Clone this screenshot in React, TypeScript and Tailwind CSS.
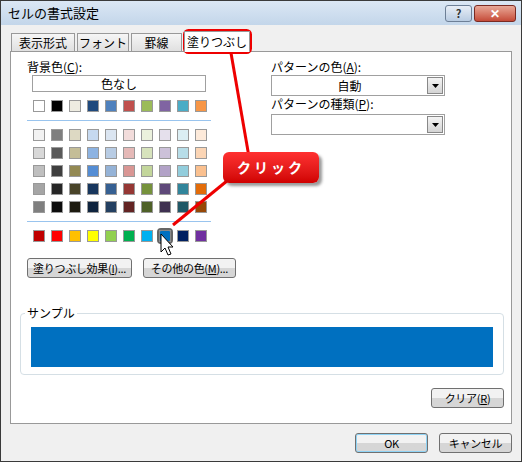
import React from "react";

const theme = ["#ffffff","#000000","#eeece1","#1f497d","#4f81bd","#c0504d","#9bbb59","#8064a2","#4bacc6","#f79646"];
const tints = [
  ["#f2f2f2","#7f7f7f","#ddd9c3","#c6d9f0","#dbe5f1","#f2dcdb","#ebf1dd","#e5e0ec","#dbeef3","#fdeada"],
  ["#d8d8d8","#595959","#c4bd97","#8db3e2","#b8cce4","#e5b9b7","#d7e3bc","#ccc1d9","#b7dde8","#fbd5b5"],
  ["#bfbfbf","#3f3f3f","#938953","#548dd4","#95b3d7","#d99694","#c3d69b","#b2a2c7","#92cddc","#fac08f"],
  ["#a5a5a5","#262626","#494429","#17365d","#366092","#953734","#76923c","#5f497a","#31859b","#e36c09"],
  ["#7f7f7f","#0c0c0c","#1d1b10","#0f243e","#244061","#632423","#4f6128","#3f3151","#205867","#974806"],
];
const std = ["#c00000","#ff0000","#ffc000","#ffff00","#92d050","#00b050","#00b0f0","#0070c0","#002060","#7030a0"];

function Row({ colors, sel }: { colors: string[]; sel?: number }) {
  return (
    <div className="flex gap-[6px]">
      {colors.map((c, i) => (
        <div key={i} className={i === sel ? "w-[12px] h-[12px] outline outline-2 outline-[#666] rounded-[2px] border border-[#888]" : "w-[12px] h-[12px] border border-[#999]"} style={{ background: c }} />
      ))}
    </div>
  );
}

function Btn({ children, w, cls = "" }: { children: React.ReactNode; w: string; cls?: string }) {
  return (
    <div className={`${w} h-[20px] border border-[#707070] rounded-[3px] bg-gradient-to-b from-[#f2f2f2] from-50% to-[#d6d6d6] to-50% flex items-center justify-center text-[11px] whitespace-nowrap tracking-[-0.3px] ${cls}`}>{children}</div>
  );
}

function Drop({ text }: { text: string }) {
  return (
    <div className="w-[174px] h-[21px] border border-[#a0a0a0] bg-white flex items-center">
      <div className="flex-1 text-center text-[12px]">{text}</div>
      <div className="w-[16px] h-[17px] mr-[1px] border border-[#888] bg-gradient-to-b from-[#f4f4f4] to-[#d4d4d4] flex items-center justify-center">
        <svg width="7" height="4"><polygon points="0,0 7,0 3.5,4" fill="#000" /></svg>
      </div>
    </div>
  );
}

const tab = "h-[18px] border border-[#999] border-b-0 bg-gradient-to-b from-[#f6f6f6] to-[#e0e0e0] leading-[17px] text-center whitespace-nowrap";

export default function App() {
  return (
    <div className="relative w-[522px] h-[462px] bg-[#f0f0f0] border border-[#3a3a3a] text-black overflow-hidden" style={{ fontFamily: '"Noto Sans CJK JP", "Liberation Sans", sans-serif' }}>
      <div className="h-[24px] bg-gradient-to-b from-[#dbe7f4] to-[#c3d6ea] flex items-center pl-[7px] pr-[5px]">
        <div className="flex-1 text-[13px]">セルの書式設定</div>
        <div className="w-[27px] h-[17px] border border-[#6d7f96] rounded-[3px] bg-gradient-to-b from-[#e8eef6] to-[#b9cce2] flex items-center justify-center text-[11px] font-bold text-[#333] mr-[2px]">?</div>
        <div className="w-[42px] h-[17px] border border-[#7a2a22] rounded-[3px] bg-gradient-to-b from-[#e8a898] to-[#c44a38] flex items-center justify-center text-white text-[12px] font-bold">✕</div>
      </div>
      <div className="px-[9px] pt-[7px]">
        <div className="flex items-end h-[19px] pl-[1px] text-[12px] gap-[2px]">
          <div className={`${tab} w-[64px]`}>表示形式</div>
          <div className={`${tab} w-[52px]`}>フォント</div>
          <div className={`${tab} w-[51px]`}>罫線</div>
          <div className="h-[21px] w-[66px] text-center whitespace-nowrap border border-[#999] border-b-0 bg-white leading-[20px] relative z-10 -mb-[1px]">塗りつぶし</div>
        </div>
        <div className="h-[373px] border border-[#999] bg-white flex flex-col px-[9px] pt-[8px]">
          <div className="flex">
            <div className="w-[244px] pl-[7px] text-[12px]">
              <div className="whitespace-nowrap leading-[14px]">背景色(<span className="underline">C</span>):</div>
              <div className="ml-[5px] mt-[1px] w-[174px] h-[17px] border border-[#a0a0a0] text-center leading-[15px]">色なし</div>
              <div className="ml-[6px] mt-[8px]"><Row colors={theme} /></div>
              <div className="mt-[8px] h-px w-[184px] bg-[#99c4ee]" />
              <div className="ml-[6px] mt-[8px] flex flex-col gap-[6px]">
                {tints.map((r, i) => <Row key={i} colors={r} />)}
              </div>
              <div className="mt-[8px] h-px w-[184px] bg-[#99c4ee]" />
              <div className="ml-[6px] mt-[8px]"><Row colors={std} sel={7} /></div>
              <div className="flex gap-[11px] mt-[16px]">
                <Btn w="w-[105px]">塗りつぶし効果(<span className="underline">I</span>)...</Btn>
                <Btn w="w-[93px]">その他の色(<span className="underline">M</span>)...</Btn>
              </div>
            </div>
            <div className="ml-[7px] text-[12px]">
              <div className="leading-[14px] whitespace-nowrap">パターンの色(<span className="underline">A</span>):</div>
              <div className="mt-[1px]"><Drop text="自動" /></div>
              <div className="leading-[14px] mt-[1px] whitespace-nowrap">パターンの種類(<span className="underline">P</span>):</div>
              <div className="mt-[3px]"><Drop text="" /></div>
            </div>
          </div>
          <div className="mt-[35px] w-[484px] h-[62px] border border-[#d5dfe5] rounded-[4px] relative px-[10px] pt-[13px]">
            <div className="absolute -top-[9px] left-[4px] bg-white px-[2px] text-[12px] leading-[16px]">サンプル</div>
            <div className="h-[40px] bg-[#0070c0]" />
          </div>
          <div className="flex justify-end mt-[13px] w-[484px]">
            <Btn w="w-[73px]">クリア(<span className="underline">R</span>)</Btn>
          </div>
        </div>
        <div className="flex justify-end gap-[11px] mt-[9px]">
          <Btn w="w-[73px]" cls="border-[#3c7fb1] shadow-[inset_0_0_0_1px_#8fd3f5]">OK</Btn>
          <Btn w="w-[73px]">キャンセル</Btn>
        </div>
      </div>

      <svg className="absolute left-0 top-0 pointer-events-none" width="522" height="462">
        <rect x="183.5" y="29.5" width="66" height="22" rx="4" fill="none" stroke="#ee0000" strokeWidth="3" />
        <line x1="230" y1="52" x2="248" y2="156" stroke="#ee0000" strokeWidth="3" />
        <line x1="232" y1="175" x2="172" y2="224" stroke="#ee0000" strokeWidth="3" />
        <path d="M160 233 L160 251 L164 247 L167 254 L170 253 L167 246 L172 246 Z" fill="#fff" stroke="#000" strokeWidth="1" />
      </svg>
      <div className="absolute left-[222px] top-[151px] w-[96px] h-[31px] rounded-[6px] bg-gradient-to-b from-[#ff3030] to-[#d00000] shadow-[3px_3px_3px_rgba(0,0,0,0.4)] flex items-center justify-center text-white text-[14px] font-bold tracking-[3px]">クリック</div>
    </div>
  );
}
